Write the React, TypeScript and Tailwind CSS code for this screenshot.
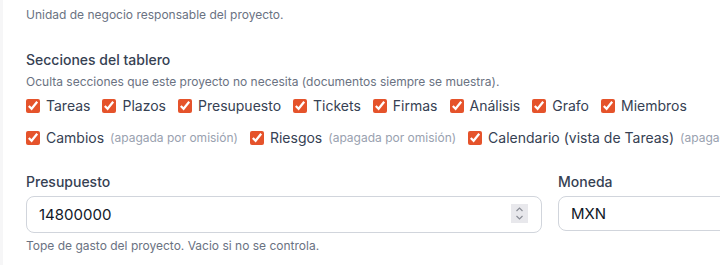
import React from 'react';

const onByDefault = ['Tareas', 'Plazos', 'Presupuesto', 'Tickets', 'Firmas', 'Análisis', 'Grafo', 'Miembros'];
const offByDefault = ['Cambios', 'Riesgos', 'Calendario (vista de Tareas)'];

const SectionCheck: React.FC<{ label: string; off?: boolean }> = ({ label, off }) => (
  <label className="flex items-center gap-1.5 whitespace-nowrap">
    <input type="checkbox" defaultChecked className="w-3.5 h-3.5 m-0 accent-[#e5532b]" />
    <span className="text-sm text-gray-700">{label}</span>
    {off && <span className="text-xs text-gray-400">(apagada por omisión)</span>}
  </label>
);

const App: React.FC = () => {
  return (
    <div className="w-[720px] h-[265px] overflow-hidden bg-[#f6f6f7] font-['Inter',sans-serif]">
      <div className="ml-[3px] h-full bg-white pl-[23px] pt-[7px] w-[1200px]">
        <p className="text-xs text-gray-500 leading-4">Unidad de negocio responsable del proyecto.</p>

        <div className="mt-[27px]">
          <h3 className="text-sm font-medium text-gray-700 leading-5">Secciones del tablero</h3>
          <p className="text-xs text-gray-500 mt-1 leading-4">
            Oculta secciones que este proyecto no necesita (documentos siempre se muestra).
          </p>
          <div className="flex gap-x-3 mt-[6px] h-5 items-center">
            {onByDefault.map((s) => (
              <SectionCheck key={s} label={s} />
            ))}
          </div>
          <div className="flex gap-x-3 mt-3 h-5 items-center">
            {offByDefault.map((s) => (
              <SectionCheck key={s} label={s} off />
            ))}
          </div>
        </div>

        <div className="flex gap-4 mt-6">
          <div className="w-[516px]">
            <label className="block text-sm font-medium text-gray-700 leading-5">Presupuesto</label>
            <div className="relative mt-[4px]">
              <input
                type="number"
                defaultValue={14800000}
                className="w-full h-[37px] rounded-lg border border-gray-300 px-3 text-[15px] text-gray-900 outline-none appearance-none [&::-webkit-inner-spin-button]:appearance-none [&::-webkit-outer-spin-button]:appearance-none"
              />
              <div className="absolute right-[14px] top-[8px] w-[17px] h-[19px] bg-[#e8e8ec] flex items-center justify-center">
                <svg width="9" height="15" viewBox="0 0 9 15" fill="none" stroke="#8a8d96" strokeWidth="1.2">
                  <path d="M1.5 5 L4.5 2 L7.5 5" />
                  <path d="M1.5 10 L4.5 13 L7.5 10" />
                </svg>
              </div>
            </div>
            <p className="text-xs text-gray-500 mt-[5px] leading-4">Tope de gasto del proyecto. Vacio si no se controla.</p>
          </div>
          <div className="w-[516px]">
            <label className="block text-sm font-medium text-gray-700 leading-5">Moneda</label>
            <input
              type="text"
              defaultValue="MXN"
              className="mt-[4px] w-full h-[35px] rounded-lg border border-gray-300 px-3 text-[15px] text-gray-900 outline-none"
            />
          </div>
        </div>
      </div>
    </div>
  );
};

export default App;
